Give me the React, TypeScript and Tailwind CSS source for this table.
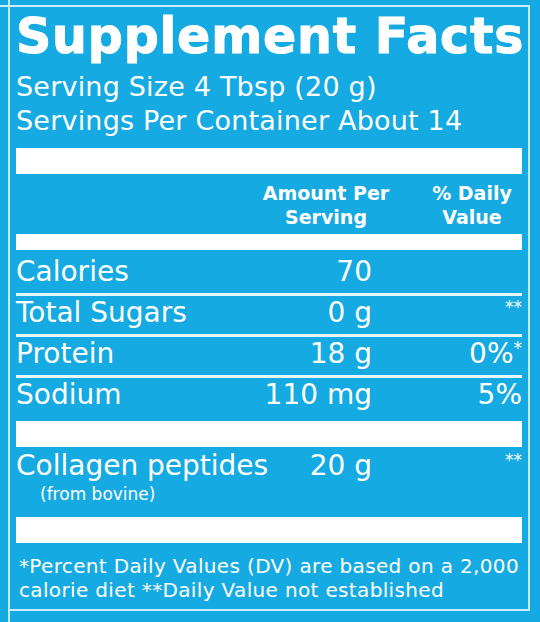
import React from "react";

const Row = ({
  label,
  amount,
  dv,
  line = true,
}: {
  label: string;
  amount: string;
  dv?: React.ReactNode;
  line?: boolean;
}) => (
  <div
    className={
      "flex items-start text-[28px] leading-[34px] " +
      (line ? "pb-[4px] border-b-[3px] border-[#e6f6fd]" : "")
    }
  >
    <div className="flex-1 min-w-0 whitespace-nowrap">{label}</div>
    <div className="w-[110px] shrink-0 text-right whitespace-nowrap">{amount}</div>
    <div className="w-[150px] shrink-0 text-right whitespace-nowrap">{dv}</div>
  </div>
);

const Stars = () => (
  <span className="text-[17px] leading-[17px] align-top relative top-[3px]">**</span>
);

export default function App() {
  return (
    <div className="relative w-[540px] h-[622px] overflow-hidden bg-[#16aae2] text-white font-['DejaVu_Sans',sans-serif]">
      {/* crop-mark extensions of the frame */}
      <div className="absolute left-0 top-[5px] w-[10px] h-[2px] bg-[#c8ebf9]" />
      <div className="absolute left-[8px] top-0 w-[2px] h-[6px] bg-[#c8ebf9]" />
      <div className="absolute left-[8px] top-[610px] w-[2px] h-[12px] bg-[#c8ebf9]" />

      <div className="ml-[8px] mt-[5px] w-[522px] h-[606px] border-2 border-[#c8ebf9] px-[6px]">
        <div className="mt-[5px] text-[49px] leading-[49px] font-bold tracking-[0.8px] whitespace-nowrap [-webkit-text-stroke:1px_white]">
          Supplement Facts
        </div>
        <div className="mt-[9px] text-[27px] leading-[34px] tracking-[0.2px] whitespace-nowrap">
          <div>Serving Size 4 Tbsp (20 g)</div>
          <div>Servings Per Container About 14</div>
        </div>
        <div className="mt-[10px] h-[26px] bg-white" />

        <div className="mt-[7px] flex justify-end text-[19px] leading-[24px] font-bold">
          <div className="w-[140px] text-center">
            <div>Amount Per</div>
            <div>Serving</div>
          </div>
          <div className="w-[26px]" />
          <div className="w-[100px] text-center">
            <div>% Daily</div>
            <div>Value</div>
          </div>
        </div>
        <div className="mt-[5px] h-[16px] bg-white" />

        <div className="mt-[5px]">
          <Row label="Calories" amount="70" />
          <Row label="Total Sugars" amount="0 g" dv={<Stars />} />
          <Row
            label="Protein"
            amount="18 g"
            dv={
              <span>
                0%
                <span className="text-[17px] leading-[17px] align-top relative top-[3px]">*</span>
              </span>
            }
          />
          <Row label="Sodium" amount="110 mg" dv="5%" line={false} />
        </div>
        <div className="mt-[9px] h-[26px] bg-white" />

        <div className="mt-[2px]">
          <Row label="Collagen peptides" amount="20 g" dv={<Stars />} line={false} />
          <div className="mt-[2px] pl-[24px] text-[17px] leading-[18px]">(from bovine)</div>
        </div>
        <div className="mt-[14px] h-[26px] bg-white" />

        <div className="mt-[11px] pl-[3px] text-[20px] leading-[24px] tracking-[0.35px] whitespace-nowrap">
          <div>*Percent Daily Values (DV) are based on a 2,000</div>
          <div>calorie diet **Daily Value not established</div>
        </div>
      </div>
    </div>
  );
}
